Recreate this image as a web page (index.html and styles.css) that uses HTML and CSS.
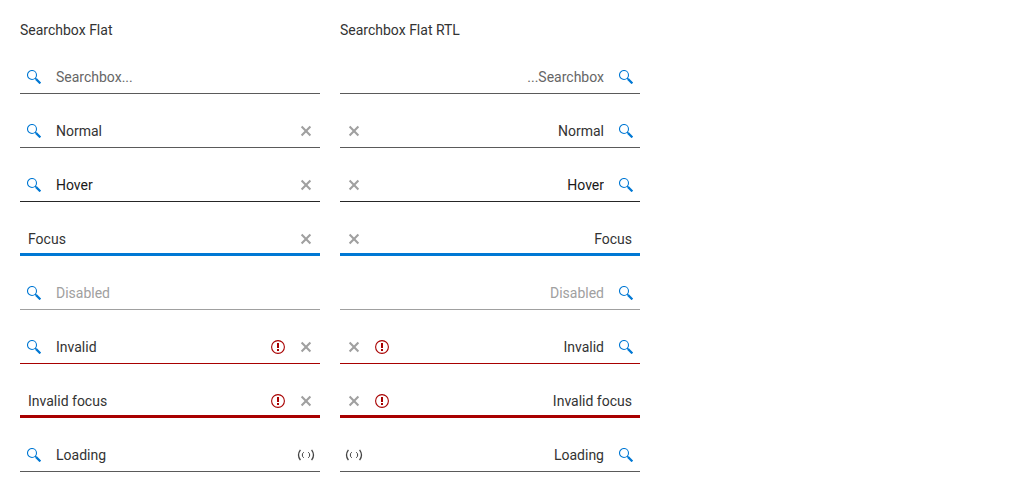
FILE: index.html
```html
<!DOCTYPE html>
<html lang="en">
<head>
<meta charset="utf-8">
<title>Searchbox Flat</title>
<link rel="stylesheet" href="styles.css">
<script src="searchbox.js" defer></script>
</head>
<body>
<svg class="sprite" aria-hidden="true">
  <symbol id="search" viewBox="0 0 14 14"><circle cx="5" cy="5" r="4.5" fill="none" stroke="currentColor" stroke-width="1.1"/><path d="M8.1 8.1 9.7 9.7" fill="none" stroke="currentColor" stroke-width="1.4"/><path d="M9.1 9.1 13.4 13.4" fill="none" stroke="currentColor" stroke-width="2.2"/></symbol>
  <symbol id="clear" viewBox="0 0 14 14"><path d="M2.6 2.6 11.4 11.4M11.4 2.6 2.6 11.4" fill="none" stroke="currentColor" stroke-width="2.1"/></symbol>
  <symbol id="alert" viewBox="0 0 14 14"><circle cx="7" cy="7" r="6.4" fill="none" stroke="currentColor" stroke-width="1.1"/><path d="M6 3h2v5H6zM6 9h2v2H6z" fill="currentColor"/></symbol>
  <symbol id="loading" viewBox="0 0 18 14"><path d="M3.4 1.8Q-.4 7 3.4 12.2M14.6 1.8Q18.4 7 14.6 12.2" fill="none" stroke="currentColor" stroke-width="1.3"/><path d="M6.8 4.2Q5.3 5 5.3 7T6.8 9.8M11.2 4.2Q12.7 5 12.7 7T11.2 9.8" fill="none" stroke="currentColor" stroke-width="1"/></symbol>
</svg>
<main class="columns">
  <section class="column" data-column>
    <h2 class="title">Searchbox Flat</h2>
  </section>
  <section class="column" data-column="rtl">
    <h2 class="title">Searchbox Flat RTL</h2>
  </section>
</main>
</body>
</html>
```

FILE: styles.css
```css
body {
  margin: 0;
  background: #fff;
  color: #333;
  font: 14px/20px Roboto, sans-serif;
}

.sprite {
  display: none;
}

.columns {
  display: grid;
  grid-template-columns: repeat(2, minmax(0, 300px));
  gap: 20px;
  padding: 20px;
}

.column {
  display: flex;
  flex-direction: column;
  gap: 22px;
}

.title {
  margin: 0;
  font: inherit;
}

.searchbox {
  display: flex;
  height: 31px;
  border-bottom: 1px solid #5a5a5a;
  color: #333;
}

.icon {
  display: flex;
  flex: none;
  align-items: center;
  justify-content: center;
  box-sizing: border-box;
  width: 28px;
  height: 30px;
  padding: 0;
  border: 0;
  background: none;
}

.icon svg {
  width: 14px;
  height: 14px;
}

.icon-search {
  color: #0078d4;
}

.icon-clear {
  color: #a0a0a0;
}

.icon-alert {
  color: #a80000;
}

.icon-loading {
  color: #444;
}

.icon-loading svg {
  width: 18px;
}

.input {
  flex: 1;
  box-sizing: border-box;
  min-width: 0;
  height: 30px;
  padding: 0 8px;
  border: 0;
  outline: 0;
  background: none;
  color: inherit;
  font: inherit;
}

.input::placeholder {
  color: #666;
  opacity: 1;
}

.hover {
  border-color: #262626;
  color: #1a1a1a;
}

.focus {
  border-color: #0078d4;
  box-shadow: inset 0 -2px #0078d4;
}

.disabled {
  border-color: #a0a0a0;
  color: #a0a0a0;
}

.invalid {
  border-color: #a80000;
}

.invalid.focus {
  box-shadow: inset 0 -2px #a80000;
}
```

FILE: searchbox.js
```js
const boxes = [
  { value: "", state: "" },
  { value: "Normal", state: "", clear: true },
  { value: "Hover", state: "hover", clear: true },
  { value: "Focus", state: "focus", clear: true },
  { value: "Disabled", state: "disabled" },
  { value: "Invalid", state: "invalid", clear: true },
  { value: "Invalid focus", state: "invalid focus", clear: true },
  { value: "Loading", state: "", loading: true }
];

function icon(name, tag = "span", attributes = "") {
  const size = name === "loading" ? 18 : 14;
  return `<${tag} class="icon icon-${name}" ${attributes}><svg viewBox="0 0 ${size} 14" aria-hidden="true"><use href="#${name}"/></svg></${tag}>`;
}

function searchbox({ value, state, clear, loading }) {
  const invalid = state.includes("invalid");
  return `<div class="searchbox ${state}">
    ${state.includes("focus") ? "" : icon("search")}
    <input class="input" type="text" role="searchbox" aria-label="${value || "Search"}" placeholder="Searchbox..." value="${value}"
      ${state === "disabled" ? "disabled" : ""} ${invalid ? 'aria-invalid="true"' : ""}>
    ${invalid ? icon("alert") : ""}
    ${clear ? icon("clear", "button", 'type="button" aria-label="Clear"') : ""}
    ${loading ? icon("loading") : ""}
  </div>`;
}

for (const column of document.querySelectorAll("[data-column]")) {
  column.insertAdjacentHTML("beforeend", boxes.map(searchbox).join(""));
  if (column.dataset.column === "rtl") {
    for (const box of column.querySelectorAll(".searchbox")) box.dir = "rtl";
  }
}
```
